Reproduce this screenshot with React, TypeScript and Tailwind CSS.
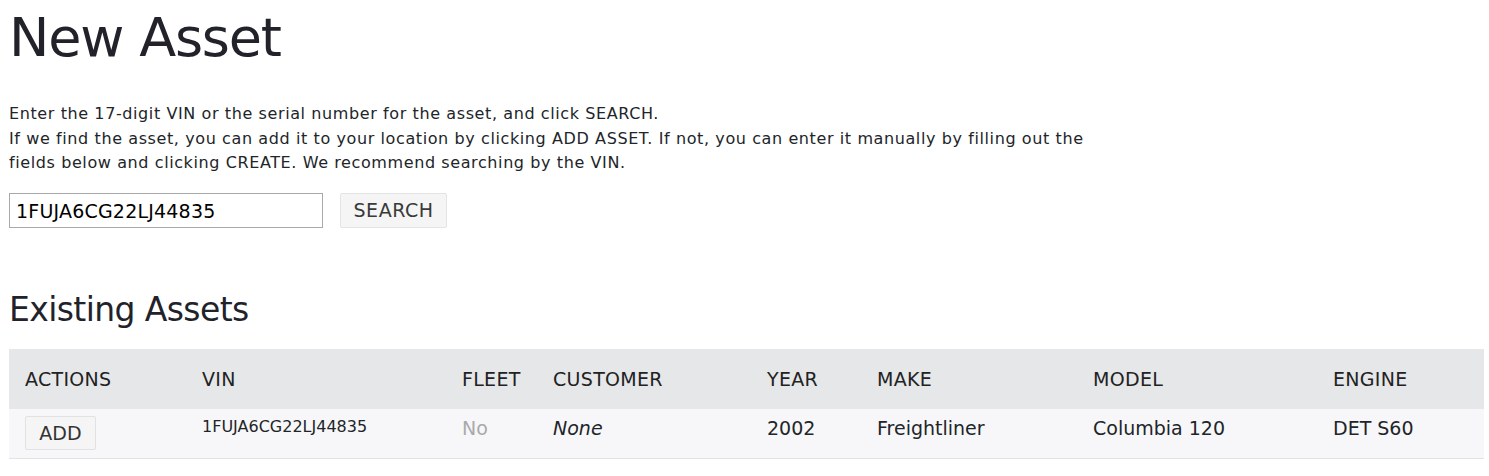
const columns = [
  { label: "ACTIONS", w: "w-[177px]" },
  { label: "VIN", w: "w-[260px]" },
  { label: "FLEET", w: "w-[91px]" },
  { label: "CUSTOMER", w: "w-[214px]" },
  { label: "YEAR", w: "w-[110px]" },
  { label: "MAKE", w: "w-[216px]" },
  { label: "MODEL", w: "w-[240px]" },
  { label: "ENGINE", w: "flex-1" },
]

const App = () => {
  return (
    <div className="min-h-[476px] bg-white px-[9px] font-['DejaVu_Sans',sans-serif] text-[#212529]">
      <h1 className="pt-[6px] text-[54px] leading-[64px] tracking-[-1.2px] text-[#22232a]">New Asset</h1>

      <div className="mt-[32px] max-w-[1100px] text-[16px] leading-[24.5px] tracking-[0.6px]">
        <p>Enter the 17-digit VIN or the serial number for the asset, and click SEARCH.</p>
        <p>
          If we find the asset, you can add it to your location by clicking ADD ASSET. If not, you can enter it
          manually by filling out the fields below and clicking CREATE. We recommend searching by the VIN.
        </p>
      </div>

      <div className="mt-[17.5px] flex items-center gap-[17px]">
        <input
          className="h-[35px] w-[314px] border border-[#a9a9a9] px-[6px] text-[19px] tracking-[0.2px] text-black outline-none"
          defaultValue="1FUJA6CG22LJ44835"
        />
        <button className="h-[35px] w-[107px] rounded-[2px] border border-[#e4e4e4] bg-[#f5f5f5] text-[19px] tracking-[0.5px] text-[#3a3a3a]">
          SEARCH
        </button>
      </div>

      <h2 className="mt-[62px] text-[33px] leading-[40px] tracking-[-0.6px] text-[#22232a]">Existing Assets</h2>

      <div className="mt-[19px] w-[1475px] text-[19px]">
        <div className="flex h-[60px] items-center bg-[#e6e7e9] tracking-[0.3px]">
          {columns.map((c) => (
            <div key={c.label} className={`${c.w} pl-[16px] text-[#222]`}>
              {c.label}
            </div>
          ))}
        </div>
        <div className="flex h-[50px] items-start border-b border-[#e2e3e5] bg-[#f7f7f9] pt-[7px] leading-[24px]">
          <div className="w-[177px] pl-[16px]">
            <button className="h-[34px] w-[71px] rounded-[2px] border border-[#e2e2e2] bg-[#f5f5f5] text-[19px] text-[#333]">
              ADD
            </button>
          </div>
          <div className="w-[260px] pl-[16px] pt-[1px] text-[16px] leading-[20px]">1FUJA6CG22LJ44835</div>
          <div className="w-[91px] pl-[16px] text-[#aaa]">No</div>
          <div className="w-[214px] pl-[16px] italic">None</div>
          <div className="w-[110px] pl-[16px]">2002</div>
          <div className="w-[216px] pl-[16px]">Freightliner</div>
          <div className="w-[240px] pl-[16px]">Columbia 120</div>
          <div className="flex-1 pl-[16px]">DET S60</div>
        </div>
      </div>
    </div>
  )
}

export default App
